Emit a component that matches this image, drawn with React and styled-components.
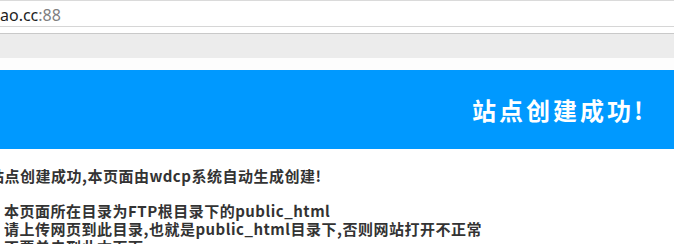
import React from 'react';
import styled, { createGlobalStyle } from 'styled-components';

const GlobalStyle = createGlobalStyle`
    html, body {
        margin: 0;
        padding: 0;
        background: #ffffff;
        overflow: hidden;
    }
`;

const Page = styled.div`
    width: 674px;
    height: 244px;
    overflow: hidden;
    background: #ffffff;
`;

const AddressBar = styled.div`
    height: 27px;
    box-sizing: border-box;
    border-top: 1px solid #dadada;
    border-bottom: 1px solid #d6d6d6;
    display: flex;
    align-items: center;
    padding-top: 3px;
    font-family: 'Noto Sans', 'Liberation Sans', sans-serif;
    font-size: 16px;
    color: #1e1e1e;
    white-space: nowrap;
`;

const Port = styled.span`
    color: #808080;
`;

const Spacer = styled.div`
    height: ${props => props.h}px;
    background: ${props => props.bg || '#ffffff'};
    border-top: ${props => props.line ? `1px solid ${props.line}` : 'none'};
`;

const Banner = styled.div`
    height: 79px;
    background: #0099ff;
    display: flex;
    align-items: center;
    justify-content: flex-end;
    padding-right: 28px;
`;

const Title = styled.h1`
    margin: 0;
    font-family: 'Noto Sans CJK SC', 'DejaVu Sans', sans-serif;
    font-size: 24px;
    font-weight: 700;
    color: #ffffff;
    letter-spacing: 3px;
`;

const Content = styled.div`
    margin-left: -11px;
    padding-top: 17px;
    font-family: 'Noto Sans CJK SC', 'Noto Sans', sans-serif;
    font-size: 15px;
    font-weight: 700;
    color: #333333;
    letter-spacing: 0.5px;
    white-space: nowrap;
`;

const Lead = styled.p`
    margin: 0 0 16px 0;
    line-height: 20px;
`;

const List = styled.ol`
    margin: 0;
    padding-left: 15px;
    list-style: none;
`;

const Item = styled.li`
    line-height: 18px;
`;

export default function App() {
    return (
        <Page>
            <GlobalStyle />
            <AddressBar>
                ao.cc<Port>:88</Port>
            </AddressBar>
            <Spacer h={6} />
            <Spacer h={24} bg="#ececec" line="#c9c9c9" />
            <Spacer h={12} bg="#fdfdfd" />
            <Banner>
                <Title>站点创建成功!</Title>
            </Banner>
            <Content>
                <Lead>站点创建成功,本页面由wdcp系统自动生成创建!</Lead>
                <List>
                    <Item>本页面所在目录为FTP根目录下的public_html</Item>
                    <Item>请上传网页到此目录,也就是public_html目录下,否则网站打开不正常</Item>
                    <Item>不要单击到此本页面</Item>
                </List>
            </Content>
        </Page>
    );
}
